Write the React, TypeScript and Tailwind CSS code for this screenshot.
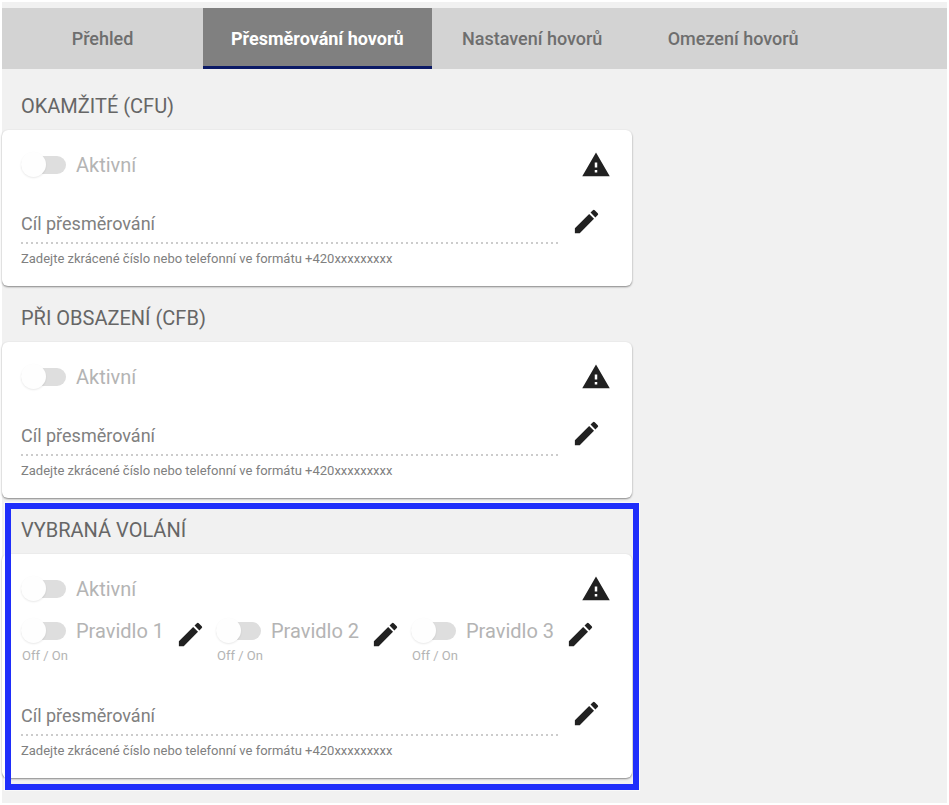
import React, { useState } from 'react';
import { MdEdit, MdWarning } from 'react-icons/md';

interface Rule {
  id: string;
  name: string;
}

interface ForwardingSection {
  id: string;
  title: string;
  highlighted?: boolean;
  rules?: Rule[];
}

const tabs = ['Přehled', 'Přesměrování hovorů', 'Nastavení hovorů', 'Omezení hovorů'];

const sections: ForwardingSection[] = [
  { id: 'cfu', title: 'OKAMŽITÉ (CFU)' },
  { id: 'cfb', title: 'PŘI OBSAZENÍ (CFB)' },
  {
    id: 'selected',
    title: 'VYBRANÁ VOLÁNÍ',
    highlighted: true,
    rules: [
      { id: 'rule-1', name: 'Pravidlo 1' },
      { id: 'rule-2', name: 'Pravidlo 2' },
      { id: 'rule-3', name: 'Pravidlo 3' }
    ]
  }
];

function Toggle({ id, label }: { id: string; label: string }) {
  return (
    <div className="flex items-center gap-2.5 h-6">
      <input
        id={id}
        type="checkbox"
        role="switch"
        disabled
        className="relative appearance-none shrink-0 w-[45px] h-[18px] rounded-full bg-[#dedede] before:absolute before:left-0 before:-top-1 before:size-[25px] before:rounded-full before:bg-[#fefefe] before:shadow-[0_1px_2px_rgba(0,0,0,0.09)]"
      />
      <label htmlFor={id} className="text-xl leading-6 text-[#b4b4b4] whitespace-nowrap">
        {label}
      </label>
    </div>
  );
}

function EditButton({ label }: { label: string }) {
  return (
    <button type="button" aria-label={label} className="shrink-0 text-[#212121]">
      <MdEdit className="size-[31px]" />
    </button>
  );
}

function ForwardingCard({ section }: { section: ForwardingSection }) {
  const { id, title, rules, highlighted } = section;

  return (
    <section className="relative max-w-[630px]">
      <h2 className="pt-5 pb-3 pl-[19px] text-xl leading-6 text-[#666666]">{title}</h2>
      <div className="rounded-md bg-white pt-5 pb-[17px] pl-[19px] pr-[21px] shadow-[0_1px_2px_rgba(0,0,0,0.45)]">
        <div className="flex items-center justify-between">
          <Toggle id={`${id}-active`} label="Aktivní" />
          <MdWarning className="size-[30px] text-[#212121]" />
        </div>

        {rules && (
          <div className="flex pt-[15px] pb-1.5">
            {rules.map((rule) => (
              <div key={rule.id} className="flex w-[195px] shrink-0 items-start gap-[11px]">
                <div>
                  <Toggle id={rule.id} label={rule.name} />
                  <p className="pt-[3px] pl-px text-[13px] leading-5 text-[#b4b4b4]">Off / On</p>
                </div>
                <EditButton label={`Upravit ${rule.name}`} />
              </div>
            ))}
          </div>
        )}

        <div className="flex items-start gap-3 pt-[26px]">
          <div className="flex-1 pt-1.5">
            <input
              id={`${id}-target`}
              type="text"
              disabled
              placeholder="Cíl přesměrování"
              aria-label="Cíl přesměrování"
              aria-describedby={`${id}-hint`}
              className="block w-full h-6 mb-1.5 bg-transparent text-lg leading-6 text-[#808080] placeholder:text-[#808080]"
            />
            <div className="h-0.5 bg-[linear-gradient(to_right,#cccccc_2px,transparent_2px)] bg-[length:5px_2px]"></div>
            <p id={`${id}-hint`} className="pt-[5px] text-[13px] leading-5 text-[#808080]">
              Zadejte zkrácené číslo nebo telefonní ve formátu +420xxxxxxxxx
            </p>
          </div>
          <div className="w-10">
            <EditButton label="Upravit cíl přesměrování" />
          </div>
        </div>
      </div>

      {highlighted && (
        <div className="pointer-events-none absolute top-[5px] left-[3px] -right-[7px] -bottom-3 border-6 border-[#1f2efb] ring-1 ring-white/60"></div>
      )}
    </section>
  );
}

export default function CallForwarding() {
  const [activeTab, setActiveTab] = useState(1);

  return (
    <div className="flex min-h-screen bg-white p-0.5 font-['Roboto','Liberation_Sans',sans-serif]">
      <div className="flex-1 bg-[#f1f1f1] pt-1.5">
        <nav className="mb-[5px] flex h-[61px] bg-[#d3d3d3]">
          {tabs.map((tab, index) => (
            <button
              key={tab}
              type="button"
              onClick={() => setActiveTab(index)}
              className={
                index === activeTab
                  ? 'min-w-[201px] border-b-3 border-[#0b1a66] bg-[#808080] px-7 pt-[3px] text-lg font-bold text-white'
                  : 'min-w-[201px] px-7 text-lg font-medium text-[#6e6e6e]'
              }
            >
              {tab}
            </button>
          ))}
        </nav>
        <main>
          {sections.map((section) => (
            <ForwardingCard key={section.id} section={section} />
          ))}
        </main>
      </div>
    </div>
  );
}
